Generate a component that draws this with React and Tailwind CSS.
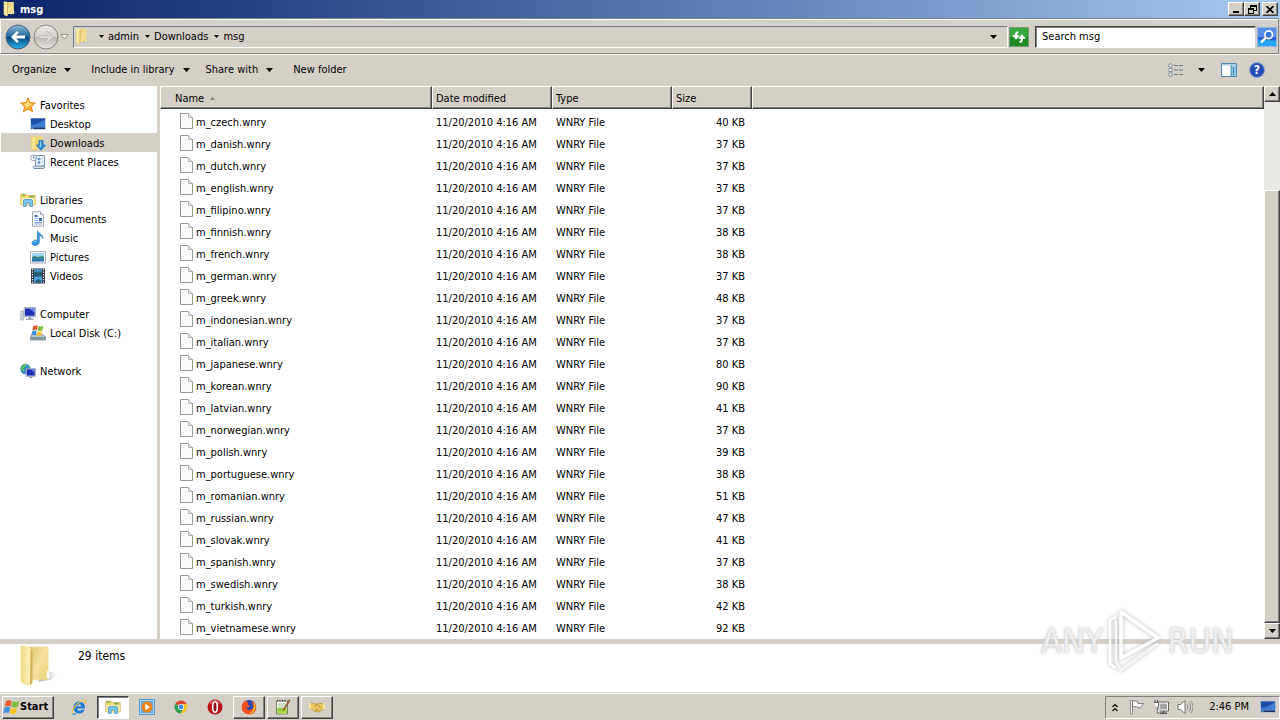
const raised =
  'bg-[#d4d0c8] border border-t-white border-l-white border-r-[#404040] border-b-[#404040] shadow-[inset_-1px_-1px_0_#808080]';

const files = [
  ['m_czech.wnry', 40],
  ['m_danish.wnry', 37],
  ['m_dutch.wnry', 37],
  ['m_english.wnry', 37],
  ['m_filipino.wnry', 37],
  ['m_finnish.wnry', 38],
  ['m_french.wnry', 38],
  ['m_german.wnry', 37],
  ['m_greek.wnry', 48],
  ['m_indonesian.wnry', 37],
  ['m_italian.wnry', 37],
  ['m_japanese.wnry', 80],
  ['m_korean.wnry', 90],
  ['m_latvian.wnry', 41],
  ['m_norwegian.wnry', 37],
  ['m_polish.wnry', 39],
  ['m_portuguese.wnry', 38],
  ['m_romanian.wnry', 51],
  ['m_russian.wnry', 47],
  ['m_slovak.wnry', 41],
  ['m_spanish.wnry', 37],
  ['m_swedish.wnry', 38],
  ['m_turkish.wnry', 42],
  ['m_vietnamese.wnry', 92],
];

const Icon = ({ size = 16, children, className = '' }) => (
  <svg width={size} height={size} viewBox="0 0 16 16" className={`shrink-0 ${className}`} aria-hidden="true">
    {children}
  </svg>
);

const Caret = ({ small }) =>
  small ? (
    <svg width="5" height="3" viewBox="0 0 5 3" className="shrink-0" aria-hidden="true">
      <path d="M0 0h5L2.5 3z" fill="#000" />
    </svg>
  ) : (
    <svg width="7" height="4" viewBox="0 0 7 4" className="shrink-0" aria-hidden="true">
      <path d="M0 0h7L3.5 4z" fill="#000" />
    </svg>
  );

const FolderIcon = ({ size = 16 }) => (
  <Icon size={size}>
    <defs>
      <linearGradient id="flap" x1="0" y1="0" x2="1" y2="0">
        <stop offset="0" stopColor="#f0d983" />
        <stop offset=".8" stopColor="#fbf0b8" />
        <stop offset="1" stopColor="#dcbc5e" />
      </linearGradient>
      <linearGradient id="body" x1="0" y1="0" x2="1" y2="1">
        <stop offset="0" stopColor="#e3c873" />
        <stop offset=".5" stopColor="#f3e09a" />
        <stop offset="1" stopColor="#ecd47c" />
      </linearGradient>
      <linearGradient id="shade" x1="0" y1="0" x2="1" y2="0">
        <stop offset="0" stopColor="#8e8e88" stopOpacity=".7" />
        <stop offset="1" stopColor="#8e8e88" stopOpacity="0" />
      </linearGradient>
    </defs>
    <path d="M10.500 9.500l4.800 1.300-2.300 2.300-5 .6z" fill="url(#shade)" />
    <path d="M4.800 1h7v12H5.500z" fill="url(#body)" />
    <path d="M1.700.600h2.500l1.600 1.600v12L4.500 15.300 1.700 13.700z" fill="url(#flap)" />
    <path d="M5.300 2l.700.800v11.300l-.900.900z" fill="#d3b257" />
    <path d="M11.200 9.800h.8v2.700h-.8z" fill="#fff" />
  </Icon>
);

const StarIcon = () => (
  <Icon>
    <path d="M8 .8l2.1 4.8 5.3.5-4 3.5 1.2 5.2L8 12.1l-4.6 2.7 1.2-5.2-4-3.5 5.3-.5z" fill="#fbb034" stroke="#de7a17" strokeWidth=".9" />
    <path d="M8 3l1.4 3.5 3.6.4-4.5 2.2L5.2 12l.8-3-3-2.2 3.5-.3z" fill="#ffe07a" />
  </Icon>
);

const DesktopIcon = () => (
  <Icon>
    <path d="M.500 2h15v11.500H.500z" fill="#8faad2" />
    <path d="M1 2.500h14v8.700H1z" fill="#1f4fa8" />
    <path d="M1 9c5-.4 9-2.500 14-5.500v7.700H1z" fill="#3f7fd6" />
    <path d="M1 11.500h14v1.500H1z" fill="#1b3568" />
    <path d="M1.500 11.700h2v1h-2z" fill="#67cdf0" />
  </Icon>
);

const DownloadsIcon = () => (
  <Icon>
    <path d="M4.500 1.300h8.300v12.200H5z" fill="#edd679" />
    <path d="M1 1l5 1.500v13l-4.600-1.300z" fill="#f8e58f" stroke="#d9ba55" strokeWidth=".5" />
    <path d="M9 5.500h4v4.500h2.500L11 15.300 6.500 10H9z" fill="#2f93dc" stroke="#1565ad" strokeWidth=".7" />
    <path d="M10 6.300h1v6.200l-2-2h1z" fill="#9fd9fa" />
  </Icon>
);

const RecentIcon = () => (
  <Icon>
    <path d="M5.500 1.500h9v10H13v3H4.500c-1.500 0-2-2-.500-2.500h1.500z" fill="#eaf1f7" stroke="#71879d" strokeWidth=".9" />
    <path d="M4 14.500h9.500c1.500 0 1.500-2.500 0-2.500H5" fill="#cddbe8" stroke="#71879d" strokeWidth=".9" />
    <path d="M8 4h2v2H8zM8 7.500h2v2H8zM11.500 4.500H13M11.500 8H13" fill="#6c9ccc" stroke="#6c9ccc" strokeWidth=".6" />
    <circle cx="3.600" cy="3.800" r="3" fill="#eef5fa" stroke="#7a8fa5" strokeWidth=".8" />
    <path d="M3.600 2v2h1.700" stroke="#456" strokeWidth=".7" fill="none" />
  </Icon>
);

const LibrariesIcon = () => (
  <Icon>
    <path d="M.800 2h5l1 1.500h8.400V13H.800z" fill="#f4da79" stroke="#cda73d" strokeWidth=".7" />
    <path d="M2 3.200h3M9 4.800h5" stroke="#54b24a" strokeWidth="1.200" />
    <path d="M1.200 6h13.600v6.500H1.200z" fill="#fbecae" />
    <path d="M3.500 14.500V8.800c0-.800.500-1.300 1.300-1.300h6.400c.800 0 1.300.500 1.300 1.300v5.700h-2.700v-3.400H6.200v3.400z" fill="#79c6ee" stroke="#3c8fc7" strokeWidth=".7" />
  </Icon>
);

const DocumentsIcon = () => (
  <Icon>
    <path d="M2.500.800h8l3 3v11.400h-11z" fill="#fff" stroke="#8190a0" strokeWidth=".8" />
    <path d="M10.500.800v3h3" fill="#dde5ee" stroke="#8190a0" strokeWidth=".7" />
    <path d="M4.500 4h3v2h-3zM9 7h3v3H9z" fill="#3a72b5" />
    <path d="M4.500 7.500H8M4.500 9.500H8M4.500 11.500H12M4.500 13H12" stroke="#5c8dc4" strokeWidth=".8" />
  </Icon>
);

const MusicIcon = () => (
  <Icon>
    <path d="M7.500.800c.800 2.700 5.700 3.500 5.500 8-.500-2-1.800-3-3.700-3.300v6.800c0 3.700-7 4.300-7.300 1-.200-2.700 3.300-3.800 5.500-2.800z" fill="#2f9be0" stroke="#1b6fb6" strokeWidth=".6" />
    <path d="M3.500 12.500c.5-1 1.700-1.300 2.700-1.100" stroke="#b8e6ff" strokeWidth="1" fill="none" />
  </Icon>
);

const PicturesIcon = () => (
  <Icon>
    <path d="M.500 2.500h15v11.500H.500z" fill="#fff" stroke="#8b98a5" strokeWidth=".8" />
    <path d="M2 4h12v8.500H2z" fill="#9bd5f0" />
    <path d="M2 8.500c3-2.500 4 0 6-.500s4-1 6-.300v2H2z" fill="#2b7d6d" />
    <path d="M2 9.700h12v2.800H2z" fill="#2a76b8" />
  </Icon>
);

const VideosIcon = () => (
  <Icon>
    <path d="M1 .500h14v15H1z" fill="#26303c" />
    <path d="M4 1h8v6.500H4z" fill="#3f8fc6" />
    <path d="M4 8.500h8V15H4z" fill="#4fa5dc" />
    <path d="M4 5c2-3 3 1 5-1s2 1 3 0v3.500H4zM5 15c0-4 5-5 6-2v2z" fill="#265f75" />
    <path d="M2.500 1v14M13.500 1v14" stroke="#fff" strokeWidth="1.200" strokeDasharray="1.200 1.300" />
  </Icon>
);

const ComputerIcon = () => (
  <Icon>
    <path d="M.800 5h2.500v9H.800z" fill="#d8dde2" stroke="#87919b" strokeWidth=".6" />
    <path d="M4 1.500h11.500v9.300H4z" fill="#c8d2e0" stroke="#7f8fa6" strokeWidth=".6" />
    <path d="M5 2.500h9.500v7.300H5z" fill="#1a2fb4" />
    <path d="M9 2.500h5.500v4z" fill="#6f8df0" />
    <path d="M8.300 11h3v1.700h2.500V14H6v-1.300h2.300z" fill="#9aa6b5" />
  </Icon>
);

const WindowsFlag = ({ size = 16 }) => (
  <Icon size={size}>
    <path d="M2.800 2.200c1.900-1.200 3.500-1.200 5.300-.3L7 7C5.300 6.200 3.700 6.300 1.700 7.400z" fill="#e9592b" />
    <path d="M8.800 2.200c1.900 1 3.900 1 6.400-.4l-1.500 5.300c-2 1.100-3.900 1-5.900.1z" fill="#7ebd3c" />
    <path d="M1.400 8.300c1.900-1.100 3.700-1.200 5.400-.3l-1.300 5.200c-1.800-.9-3.400-.8-5.400.4z" fill="#3e8ede" />
    <path d="M7.600 8.200c1.900 1 3.800 1 5.800-.1l-1.500 5.300c-2 1.100-3.600 1-5.600.1z" fill="#fbc22d" />
  </Icon>
);

const DiskIcon = () => (
  <Icon>
    <path d="M2 9.500h11l2.500 2.500v3H.500v-3z" fill="#b9c4cd" stroke="#6d7c88" strokeWidth=".7" />
    <path d="M.800 12h14.400v2.700H.800z" fill="#7f929f" />
    <path d="M12 13h2v1h-2z" fill="#63e05b" />
    <path d="M3.200 1.300C5 .300 6.300.300 7.700.900L7 5.200c-1.500-.700-2.900-.600-4.600.2z" fill="#e9592b" />
    <path d="M8.400 1c1.700.800 3.100.800 5-.2l-1 4.400c-1.700.9-3.100.9-4.700.2z" fill="#7ebd3c" />
    <path d="M2.200 6.200c1.600-.9 3-1 4.500-.3l-.8 4.200c-1.600-.7-2.900-.6-4.600.3z" fill="#3e8ede" />
    <path d="M7.500 6.100c1.600.8 3.100.8 4.700-.1l-1 4.200c-1.600.9-2.900.8-4.500.1z" fill="#fbc22d" />
  </Icon>
);

const NetworkIcon = () => (
  <Icon>
    <circle cx="5.500" cy="6" r="5.200" fill="#2e8bcf" />
    <path d="M2 3c2-2.500 4-2.200 5-1.500C6 3 5.500 4 3.500 5c-.5 2 1 2 1.500 4C3 9 .800 7 .600 5.500zM8 2l2 2-2 1z" fill="#5fc267" />
    <path d="M6 5.500h9.500v8H6z" fill="#ccd6e2" stroke="#7d8da3" strokeWidth=".5" />
    <path d="M6.800 6.300h7.900v6.300H6.800z" fill="#1a2fb4" />
    <path d="M10.500 6.300h4.200v3.500z" fill="#6f8df0" />
    <path d="M9.300 13.500h3V15h-3z" fill="#8d9bad" />
  </Icon>
);

const FileIcon = () => (
  <svg width="13" height="16" viewBox="0 0 13 16" className="shrink-0" aria-hidden="true">
    <path d="M.500.500h8l4 4v11H.500z" fill="#fafafa" stroke="#979797" />
    <path d="M8.500.500v4h4" fill="#ececec" stroke="#b4b4b4" />
  </svg>
);

const groups = [
  { title: 'Favorites', icon: StarIcon, items: [['Desktop', DesktopIcon], ['Downloads', DownloadsIcon], ['Recent Places', RecentIcon]] },
  { title: 'Libraries', icon: LibrariesIcon, items: [['Documents', DocumentsIcon], ['Music', MusicIcon], ['Pictures', PicturesIcon], ['Videos', VideosIcon]] },
  { title: 'Computer', icon: ComputerIcon, items: [['Local Disk (C:)', DiskIcon]] },
  { title: 'Network', icon: NetworkIcon, items: [] },
];

const TitleBar = () => (
  <header className="flex h-[18px] shrink-0 items-center bg-linear-to-r from-[#0a246a] to-[#a6caf0] px-0.5">
    <FolderIcon />
    <h1 className="ml-0.5 flex-1 pt-px text-[11px] font-bold text-white">msg</h1>
    <button aria-label="Minimize" className={`flex h-3.5 w-4 items-end justify-center ${raised}`}>
      <span className="mb-0.5 h-0.5 w-1.5 bg-black" />
    </button>
    <button aria-label="Restore" className={`flex h-3.5 w-4 items-center justify-center ${raised}`}>
      <svg width="9" height="9" viewBox="0 0 9 9" fill="none" stroke="#000" shapeRendering="crispEdges">
        <path d="M2.500 3V.500h6v5H6M2 1h7M.500 3.500h5v5h-5zM0 4h6" />
      </svg>
    </button>
    <button aria-label="Close" className={`ml-0.5 flex h-3.5 w-4 items-center justify-center ${raised}`}>
      <svg width="8" height="7" viewBox="0 0 8 7" stroke="#000" strokeWidth="1.600">
        <path d="M.500 0l7 7M7.500 0l-7 7" />
      </svg>
    </button>
  </header>
);

const AddressBar = () => (
  <div className="mr-px flex h-9 shrink-0 items-center border border-t-[#808080] border-r-[#808080] border-b-[#808080] border-l-white pr-px pl-1 pt-px shadow-[inset_0_1px_0_#fff,0_1px_0_#fff]">
    <button aria-label="Back" className="shrink-0">
      <svg width="26" height="26" viewBox="0 0 26 26">
        <defs>
          <linearGradient id="back" x1="0" y1="0" x2="0" y2="1">
            <stop offset="0" stopColor="#8db9d8" />
            <stop offset=".48" stopColor="#22699f" />
            <stop offset=".52" stopColor="#0c4680" />
            <stop offset="1" stopColor="#29b7e8" />
          </linearGradient>
        </defs>
        <circle cx="13" cy="13" r="12" fill="url(#back)" stroke="#4a5f75" />
        <path d="M6 13l6-6 1.800 1.800-2.700 2.700H20v3h-8.900l2.700 2.700L12 19z" fill="#fff" />
      </svg>
    </button>
    <button aria-label="Forward" className="ml-0.5 shrink-0">
      <svg width="26" height="26" viewBox="0 0 26 26">
        <defs>
          <linearGradient id="fwd" x1="0" y1="0" x2="0" y2="1">
            <stop offset="0" stopColor="#ebe9e6" />
            <stop offset=".48" stopColor="#d3d1cd" />
            <stop offset=".52" stopColor="#bdbab5" />
            <stop offset="1" stopColor="#e6e4e1" />
          </linearGradient>
        </defs>
        <circle cx="13" cy="13" r="12" fill="url(#fwd)" stroke="#85837f" />
        <path d="M20 13l-6-6-1.800 1.800 2.700 2.700H6v3h8.900l-2.700 2.700L14 19z" fill="#dcd9d5" stroke="#b3b0aa" strokeWidth=".6" />
      </svg>
    </button>
    <button aria-label="Recent pages" className="ml-px shrink-0">
      <svg width="9" height="6" viewBox="0 0 9 6">
        <path d="M.800.500h7.400L4.500 5z" fill="#f4f2ee" stroke="#808080" strokeWidth=".8" />
      </svg>
    </button>
    <nav className="ml-1 flex h-[22px] flex-1 items-center border border-t-[#6d7b8a] border-r-white border-b-white border-l-[#6d7b8a]">
      <FolderIcon size={17} />
      <ol className="ml-2 flex flex-1 items-center">
        {['admin', 'Downloads', 'msg'].map((name) => (
          <li key={name} className="flex items-center gap-1 pr-1.5">
            <Caret small />
            <a href="#" className="text-black">{name}</a>
          </li>
        ))}
      </ol>
      <button aria-label="Previous locations" className="mr-2.5">
        <Caret />
      </button>
    </nav>
    <button aria-label="Refresh" className="mr-1.5 ml-px shrink-0 border border-[#7d9a78] bg-[#35a83b]">
      <Icon size={18}>
        <path d="M0 8h16v8H0z" fill="#1c8a24" />
        <path d="M7 2.800C5 3 4.400 4.300 4.400 6.500H1.800l3.600 4 3.400-4H6.500c0-1.500.2-2.200 1.700-2.800zM9 13.200c2-.200 2.600-1.500 2.600-3.700h2.600l-3.600-4-3.400 4h2.300c0 1.500-.2 2.200-1.700 2.800z" fill="#fff" />
      </Icon>
    </button>
    <input
      aria-label="Search msg"
      placeholder="Search msg"
      className="h-[22px] w-[221px] border border-t-[#404040] border-r-[#d4d0c8] border-b-white border-l-[#404040] bg-white px-1.5 text-black shadow-[inset_1px_1px_0_#808080] outline-none placeholder:text-black"
    />
    <button aria-label="Search" className="ml-px shrink-0 border border-[#8fb4e6] bg-[#2a62d4]">
      <Icon size={18}>
        <path d="M0 0h16v8H0z" fill="#5b8ee6" />
        <path d="M0 11h16v5H0z" fill="#27a5ee" />
        <circle cx="9.500" cy="6" r="3.400" fill="#3a72d8" stroke="#fff" strokeWidth="1.500" />
        <path d="M6.800 8.800L2.800 12.700" stroke="#fff" strokeWidth="2.200" />
      </Icon>
    </button>
  </div>
);

const Toolbar = () => (
  <div className="flex h-8 shrink-0 items-center pr-[15px] pl-3">
    <button className="flex items-center gap-2">Organize <Caret /></button>
    <button className="ml-5 flex items-center gap-2">Include in library <Caret /></button>
    <button className="ml-4 flex items-center gap-2">Share with <Caret /></button>
    <button className="ml-5">New folder</button>
    <div className="flex-1" />
    <button aria-label="Change your view" className="flex items-center gap-3.5">
      <Icon>
        <path d="M1 2h3v3H1zM1 6.500h3v3H1zM1 11h3v3H1z" fill="#fff" stroke="#6d7a88" strokeWidth=".8" />
        <path d="M6 3.500h4M11 3.500h4M6 8h4M11 8h4M6 12.500h4M11 12.500h4" stroke="#6d7a88" />
      </Icon>
      <Caret />
    </button>
    <button aria-label="Show the preview pane" className="ml-4">
      <Icon>
        <path d="M.500 1.500h15v13H.500z" fill="#fff" stroke="#4c86ae" />
        <path d="M1 2h14v1.500H1z" fill="#a8cbe2" />
        <path d="M10 3.500h5V14h-5z" fill="#8cc9e6" />
        <path d="M10 3v11M12.500 5v8" stroke="#4c86ae" />
      </Icon>
    </button>
    <button aria-label="Get help" className="ml-3 flex h-4 w-4 items-center justify-center rounded-full border border-[#8ea4cf] bg-[#244fae] text-xs font-bold text-white">
      ?
    </button>
  </div>
);

const Sidebar = () => (
  <nav className="flex w-[157px] shrink-0 flex-col gap-[19px] bg-white pt-[9px]">
    {groups.map(({ title, icon: GroupIcon, items }) => (
      <div key={title}>
        <a href="#" className="flex h-[19px] items-center gap-1 pl-5">
          <GroupIcon />
          <span className="pt-[3px]">{title}</span>
        </a>
        {items.map(([name, ItemIcon]) => (
          <a
            key={name}
            href="#"
            className={`ml-px flex h-[19px] items-center gap-1 pl-[29px] ${name === 'Downloads' ? 'bg-[#d4d0c8]' : ''}`}
          >
            <ItemIcon />
            <span className="pt-[3px]">{name}</span>
          </a>
        ))}
      </div>
    ))}
  </nav>
);

const HeaderCell = ({ children, className = '' }) => (
  <th scope="col" className="h-6 p-0 align-top font-normal">
    <div className={`flex h-[23px] items-center border border-t-white border-r-[#404040] border-b-[#404040] border-l-white bg-[#d4d0c8] pt-0.5 shadow-[inset_-1px_-1px_0_#808080] ${className}`}>
      {children}
    </div>
  </th>
);

const FileList = () => (
  <div className="min-w-0 flex-1 overflow-hidden bg-white">
    <table className="w-full table-fixed border-collapse text-left">
      <colgroup>
        <col className="w-[272px]" />
        <col className="w-[120px]" />
        <col className="w-[120px]" />
        <col className="w-[80px]" />
        <col />
      </colgroup>
      <thead>
        <tr>
          <HeaderCell className="gap-1.5 pl-3.5">
            Name
            <svg width="5" height="3" viewBox="0 0 5 3" aria-hidden="true"><path d="M0 3h5L2.500 0z" fill="#808080" /></svg>
          </HeaderCell>
          <HeaderCell className="pl-[3px]">Date modified</HeaderCell>
          <HeaderCell className="pl-[3px]">Type</HeaderCell>
          <HeaderCell className="pl-[3px]">Size</HeaderCell>
          <HeaderCell />
        </tr>
      </thead>
      <tbody>
        {files.map(([name, size]) => (
          <tr key={name} className="h-[22px]">
            <td className="p-0 pl-5">
              <div className="flex items-center gap-[3px]">
                <FileIcon />
                <span className="pt-1">{name}</span>
              </div>
            </td>
            <td className="p-0 pt-1 pl-1">11/20/2010 4:16 AM</td>
            <td className="p-0 pt-1 pl-1">WNRY File</td>
            <td className="p-0 pt-1 pr-[7px] text-right">{size} KB</td>
            <td className="p-0" />
          </tr>
        ))}
      </tbody>
    </table>
  </div>
);

const Scrollbar = () => (
  <div className="flex w-4 shrink-0 flex-col bg-[#eae8e4]">
    <button aria-label="Scroll up" className={`flex h-4 items-center justify-center ${raised}`}>
      <svg width="7" height="4" viewBox="0 0 7 4"><path d="M0 4h7L3.500 0z" /></svg>
    </button>
    <div className="h-[88px]" />
    <div className={`flex-1 ${raised}`} />
    <button aria-label="Scroll down" className={`flex h-4 items-center justify-center ${raised}`}>
      <Caret />
    </button>
  </div>
);

const TaskButton = ({ label, state = 'flat', children }) => {
  const styles = {
    flat: 'border border-transparent',
    raised,
    active: 'bg-white border border-t-[#404040] border-l-[#404040] border-r-white border-b-white shadow-[inset_1px_1px_0_#808080]',
  };
  return (
    <button aria-label={label} className={`flex h-[23px] w-8 items-center justify-center ${styles[state]}`}>
      {children}
    </button>
  );
};

const Taskbar = () => (
  <footer className="flex h-7 shrink-0 items-center border-t border-[#d4d0c8] pt-px pl-0.5 shadow-[inset_0_1px_0_#fff]">
    <button className={`flex h-[23px] w-[52px] items-center text-[11px] font-bold ${raised}`}>
      <WindowsFlag size={17} />
      Start
    </button>
    <div className="ml-[9px] flex gap-0.5">
      <TaskButton label="Internet Explorer">
        <Icon>
          <path d="M13.700 10.800c-.9 2.400-3 3.700-5.400 3.700-3.300 0-5.800-2.600-5.800-6s2.500-6 5.800-6S14 5.100 14 8.500v1H6.200c.1 1.300 1 2.200 2.200 2.200.9 0 1.500-.3 2-.9zM6.300 7.200h4.100c-.2-1.200-1-1.900-2.100-1.900s-1.800.7-2 1.900z" fill="#1f7fd4" fillRule="evenodd" />
          <path d="M1.500 15C-.300 12.500 4.500 4.800 11 1.800c3.500-1.400 4.300.4 3.200 3" fill="none" stroke="#edbd3c" strokeWidth="1.200" />
          <path d="M1.500 15c1 .8 2.500 0 3.500-.700" fill="none" stroke="#1f7fd4" strokeWidth="1.200" />
        </Icon>
      </TaskButton>
      <TaskButton label="Windows Explorer" state="active"><LibrariesIcon /></TaskButton>
      <TaskButton label="Windows Media Player">
        <Icon>
          <path d="M.500.500h15v15H.500z" fill="#b7d7f0" stroke="#4f94cc" />
          <path d="M2 2h12v12H2z" fill="#63a7dc" />
          <circle cx="8" cy="8" r="5.500" fill="#f08519" />
          <path d="M6.300 4.800L11 8l-4.700 3.200z" fill="#fff" />
        </Icon>
      </TaskButton>
      <TaskButton label="Google Chrome">
        <Icon>
          <circle cx="8" cy="8" r="6.500" fill="#f4c430" />
          <path d="M8 8L2.400 4.700A6.500 6.500 0 0 1 13.700 5H8z" fill="#dc4437" />
          <path d="M8 8L2.400 4.700A6.500 6.500 0 0 0 7.500 14.500L10.500 9z" fill="#2b9d57" />
          <circle cx="8" cy="8" r="3.100" fill="#fff" />
          <circle cx="8" cy="8" r="2.400" fill="#4586ed" />
        </Icon>
      </TaskButton>
      <TaskButton label="Opera">
        <Icon>
          <circle cx="8" cy="8" r="7.500" fill="#b81418" />
          <path d="M2 4c3-4 9-4 12 0-2 2-9 3-12 0z" fill="#dd6a66" opacity=".7" />
          <ellipse cx="8" cy="8" rx="2.300" ry="5.200" fill="#8b0c10" stroke="#fff" strokeWidth="1.600" />
        </Icon>
      </TaskButton>
      <TaskButton label="Firefox" state="raised">
        <Icon>
          <circle cx="8" cy="8" r="7" fill="#2747b8" />
          <path d="M2 3.500c1-.200 1.500-1.500 2-2.500.7 1.500 2 2 3.500 2.200C6 5 7 6.500 9 6.500 8 9 5.500 9 5 8c0 3 5.500 4.500 7 .5.500-2.500-.5-4.500-2-6.500 3.500 1 5.500 3.500 5.300 6.500C15 13 11.500 15.500 8 15.500S.7 12.500.7 8.500C.700 6.500 1.200 5 2 3.500z" fill="#f4511e" />
          <path d="M12.500 3.500c2 2 2.500 5 1 8-1.300 2.500-4 3.300-6 3 4-1 6.500-5 5-11z" fill="#fdc62e" />
        </Icon>
      </TaskButton>
      <TaskButton label="Notepad++" state="raised">
        <Icon>
          <path d="M1.500 2h11v13h-11z" fill="#fbfdf8" stroke="#5f665a" strokeWidth=".8" />
          <path d="M2 9h10v5.500H2z" fill="#a9d943" />
          <path d="M3 5h8M3 7h8M3 9h6M3 11h5" stroke="#7da35b" strokeWidth=".7" />
          <path d="M2.500 2.500V.800M5 2.500V.800M7.500 2.500V.800M10 2.500V.800" stroke="#333" strokeWidth=".9" />
          <path d="M15 1.500l-5.500 9-1.300 1.500.400-2L14 .700z" fill="#dd6a2c" stroke="#43331d" strokeWidth=".5" />
        </Icon>
      </TaskButton>
      <TaskButton label="Handshake" state="raised">
        <Icon>
          <path d="M0 4.500l3-.5 3 1.300L9 4l4 .8L16 4v6.500l-3 .5-4 2.300-3.500-1L3 10 0 10.500z" fill="#edc967" stroke="#a98330" strokeWidth=".6" />
          <path d="M5.500 8l3-2.500L12 9.500M8 12l-2-2M10 11.500L8 9.500" fill="none" stroke="#8d6a22" strokeWidth=".7" />
          <path d="M0 4h2v6.500H0zM14.300 4H16v6.500h-1.700z" fill="#f8e5a6" />
        </Icon>
      </TaskButton>
    </div>
    <div className="flex-1" />
    <div className="flex h-[23px] items-center border border-t-[#808080] border-r-white border-b-white border-l-[#808080] pr-[3px] pl-1.5">
      <button aria-label="Show hidden icons">
        <svg width="6" height="9" viewBox="0 0 6 9" fill="none" stroke="#000" strokeWidth="1.200">
          <path d="M.500 4L3 1.500 5.500 4M.500 8L3 5.500 5.500 8" />
        </svg>
      </button>
      <Icon className="ml-[11px]">
        <path d="M2.500 1v14.500" stroke="#666" strokeWidth="2.200" />
        <path d="M2.500 1.500v13.500" stroke="#fff" strokeWidth=".9" />
        <path d="M3.500 2.500c2-1 3.500-.5 5 0v1.500c2 .8 4 .8 6 .5-1 1.500-1.500 2.500-2.500 4-1.500.5-3 .3-4-.5-1.500-.5-3-.5-4.500 0z" fill="#fff" stroke="#666" strokeWidth=".9" />
      </Icon>
      <Icon className="ml-2">
        <path d="M5 3h10.500v9H5z" fill="#fff" stroke="#555" strokeWidth=".9" />
        <path d="M6.500 4.500H14v6H6.500z" fill="#a4a4a4" />
        <path d="M7 14.300h7M10.500 12v2" stroke="#555" strokeWidth="1.400" />
        <path d="M.800 3.500h4.700V7L4.300 8.200V14H7.500" fill="#fff" stroke="#555" strokeWidth=".9" />
        <path d="M2 .800v2.700M4.500.800v2.700" stroke="#555" strokeWidth="1" />
      </Icon>
      <Icon className="ml-2">
        <path d="M1 5.500h2.500L8 1.500v13l-4.500-4H1z" fill="#fff" stroke="#666" strokeWidth=".9" />
        <path d="M10 5.500c1 1.500 1 3.500 0 5M12 3.500c2 2.700 2 6.300 0 9M14 2c2.500 4 2.500 8 0 12" fill="none" stroke="#777" strokeWidth=".8" />
      </Icon>
      <time className="mr-[11px] ml-4">2:46 PM</time>
      <DesktopIcon />
    </div>
  </footer>
);

const Watermark = () => (
  <div className="pointer-events-none absolute right-[46px] bottom-[46px] flex items-center gap-1 text-[34px] leading-none text-white/70 [text-shadow:0_0_2px_#c4c4c4,0_0_4px_#d4d4d4]">
    <span>ANY</span>
    <svg width="56" height="66" viewBox="0 0 56 66" fill="none" strokeLinejoin="round" className="opacity-80 drop-shadow-[0_0_2px_#a8a8a8]">
      <path d="M9 9L3 12v44l6 4" stroke="#fff" strokeWidth="2.500" />
      <path d="M14 4v46l37-20z" stroke="#fff" strokeWidth="3.500" />
      <path d="M9 12v42l5 8 37-27" stroke="#f4f4f4" strokeWidth="2.500" />
    </svg>
    <span>RUN</span>
  </div>
);

const App = () => {
  return (
    <div className="relative flex h-screen flex-col overflow-hidden bg-[#d4d0c8] text-[11px] leading-[14px] text-black font-['DejaVu_Sans_Condensed','Liberation_Sans',sans-serif]">
      <TitleBar />
      <AddressBar />
      <Toolbar />
      <main className="flex min-h-0 flex-1">
        <Sidebar />
        <div className="w-[3px] shrink-0" />
        <FileList />
        <Scrollbar />
      </main>
      <section className="mt-[5px] flex h-12 shrink-0 items-start bg-white pl-4">
        <FolderIcon size={44} />
        <p className="mt-1 ml-[18px] text-xs">29 items</p>
      </section>
      <Taskbar />
      <Watermark />
    </div>
  );
};

export default App;
